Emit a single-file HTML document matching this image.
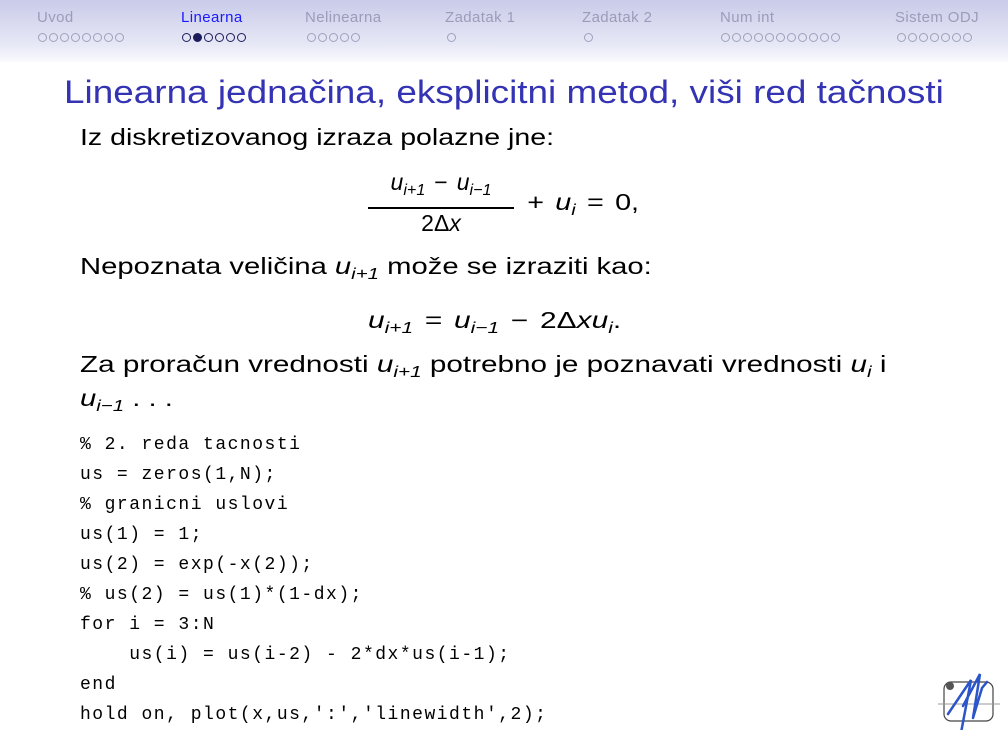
<!DOCTYPE html>
<html><head><meta charset="utf-8"><style>
body{margin:0;width:1008px;height:756px;overflow:hidden;background:#fff;position:relative;font-family:"Liberation Sans",sans-serif;color:#000}
.hdr{position:absolute;left:0;top:0;width:1008px;height:62px;background:linear-gradient(#c9cbe9,#e6e7f5 70%,#fafafe)}
.nav{position:absolute;top:9px;font-size:15px;letter-spacing:.4px;color:#9c9cba;white-space:nowrap}
.nav.on{color:#1a1aff}
.dots{position:absolute;top:33px;white-space:nowrap;line-height:0}
.d{display:inline-block;border:1px solid #a0a0bc;border-radius:50%;margin-right:2px;box-sizing:border-box;width:9px;height:9px}
.dots.on .d{border-color:#1c1c5c;border-width:1.5px}
.dots.on .f{background:#1c1c5c}
.t{position:absolute;white-space:nowrap;transform-origin:0 0}
.b{font-size:23px;transform:scaleX(1.27)}
.m{font-style:italic}
.o{margin:0 9px}
sub{font-size:70%;vertical-align:-5px}
pre{position:absolute;left:80px;top:430px;margin:0;font-family:"Liberation Mono",monospace;font-size:18px;letter-spacing:1.5px;line-height:30px}
</style></head><body>
<div class="hdr"></div>
<div class="nav" style="left:37px">Uvod</div>
<div class="dots" style="left:38px"><span class="d"></span><span class="d"></span><span class="d"></span><span class="d"></span><span class="d"></span><span class="d"></span><span class="d"></span><span class="d"></span></div>
<div class="nav on" style="left:181px">Linearna</div>
<div class="dots on" style="left:182px"><span class="d"></span><span class="d f"></span><span class="d"></span><span class="d"></span><span class="d"></span><span class="d"></span></div>
<div class="nav" style="left:305px">Nelinearna</div>
<div class="dots" style="left:307px"><span class="d"></span><span class="d"></span><span class="d"></span><span class="d"></span><span class="d"></span></div>
<div class="nav" style="left:445px">Zadatak 1</div>
<div class="dots" style="left:447px"><span class="d"></span></div>
<div class="nav" style="left:582px">Zadatak 2</div>
<div class="dots" style="left:584px"><span class="d"></span></div>
<div class="nav" style="left:720px">Num int</div>
<div class="dots" style="left:721px"><span class="d"></span><span class="d"></span><span class="d"></span><span class="d"></span><span class="d"></span><span class="d"></span><span class="d"></span><span class="d"></span><span class="d"></span><span class="d"></span><span class="d"></span></div>
<div class="nav" style="left:895px">Sistem ODJ</div>
<div class="dots" style="left:897px"><span class="d"></span><span class="d"></span><span class="d"></span><span class="d"></span><span class="d"></span><span class="d"></span><span class="d"></span></div>

<div class="t" style="left:64px;top:74px;font-size:32px;color:#3333b3;transform:scaleX(1.153)">Linearna jednačina, eksplicitni metod, viši red tačnosti</div>
<div class="t b" style="left:80px;top:124px;transform:scaleX(1.24)">Iz diskretizovanog izraza polazne jne:</div>

<div class="t" style="left:368px;top:169px;font-size:23px;text-align:center;width:146px"><span class="m">u<sub>i+1</sub></span><span class="o">−</span><span class="m">u<sub>i−1</sub></span></div>
<div class="t" style="left:368px;top:207px;width:146px;height:1.5px;background:#000"></div>
<div class="t" style="left:368px;top:210px;font-size:23px;text-align:center;width:146px">2Δ<span class="m">x</span></div>
<div class="t" style="left:516px;top:189px;font-size:23px;transform:scaleX(1.25)"><span class="o">+</span><span class="m">u<sub>i</sub></span><span class="o">=</span>0,</div>

<div class="t b" style="left:80px;top:253px">Nepoznata veličina <span class="m">u<sub>i+1</sub></span> može se izraziti kao:</div>
<div class="t" style="left:368px;top:307px;font-size:23px;transform:scaleX(1.3)"><span class="m">u<sub>i+1</sub></span><span class="o">=</span><span class="m">u<sub>i−1</sub></span><span class="o">−</span>2Δ<span class="m">xu<sub>i</sub></span>.</div>
<div class="t b" style="left:80px;top:351px;transform:scaleX(1.29)">Za proračun vrednosti <span class="m">u<sub>i+1</sub></span> potrebno je poznavati vrednosti <span class="m">u<sub>i</sub></span> i</div>
<div class="t b" style="left:80px;top:385px"><span class="m">u<sub>i−1</sub></span> . . .</div>

<pre>% 2. reda tacnosti
us = zeros(1,N);
% granicni uslovi
us(1) = 1;
us(2) = exp(-x(2));
% us(2) = us(1)*(1-dx);
for i = 3:N
    us(i) = us(i-2) - 2*dx*us(i-1);
end
hold on, plot(x,us,':','linewidth',2);</pre>

<svg class="t" style="left:930px;top:650px" width="70" height="80" viewBox="0 0 70 80">
<rect x="14" y="32" width="49" height="39" rx="7" fill="none" stroke="#444" stroke-width="1.2"/>
<line x1="8" y1="54" x2="70" y2="54" stroke="#999" stroke-width="1"/>
<circle cx="20" cy="36" r="4" fill="#555"/>
<path d="M18 64 L41 30 L30 88 M33 56 L50 24 L43 68 M43 68 L52 38 L57 32" fill="none" stroke="#2b55c8" stroke-width="2.5" stroke-linecap="round"/>
</svg>
</body></html>
